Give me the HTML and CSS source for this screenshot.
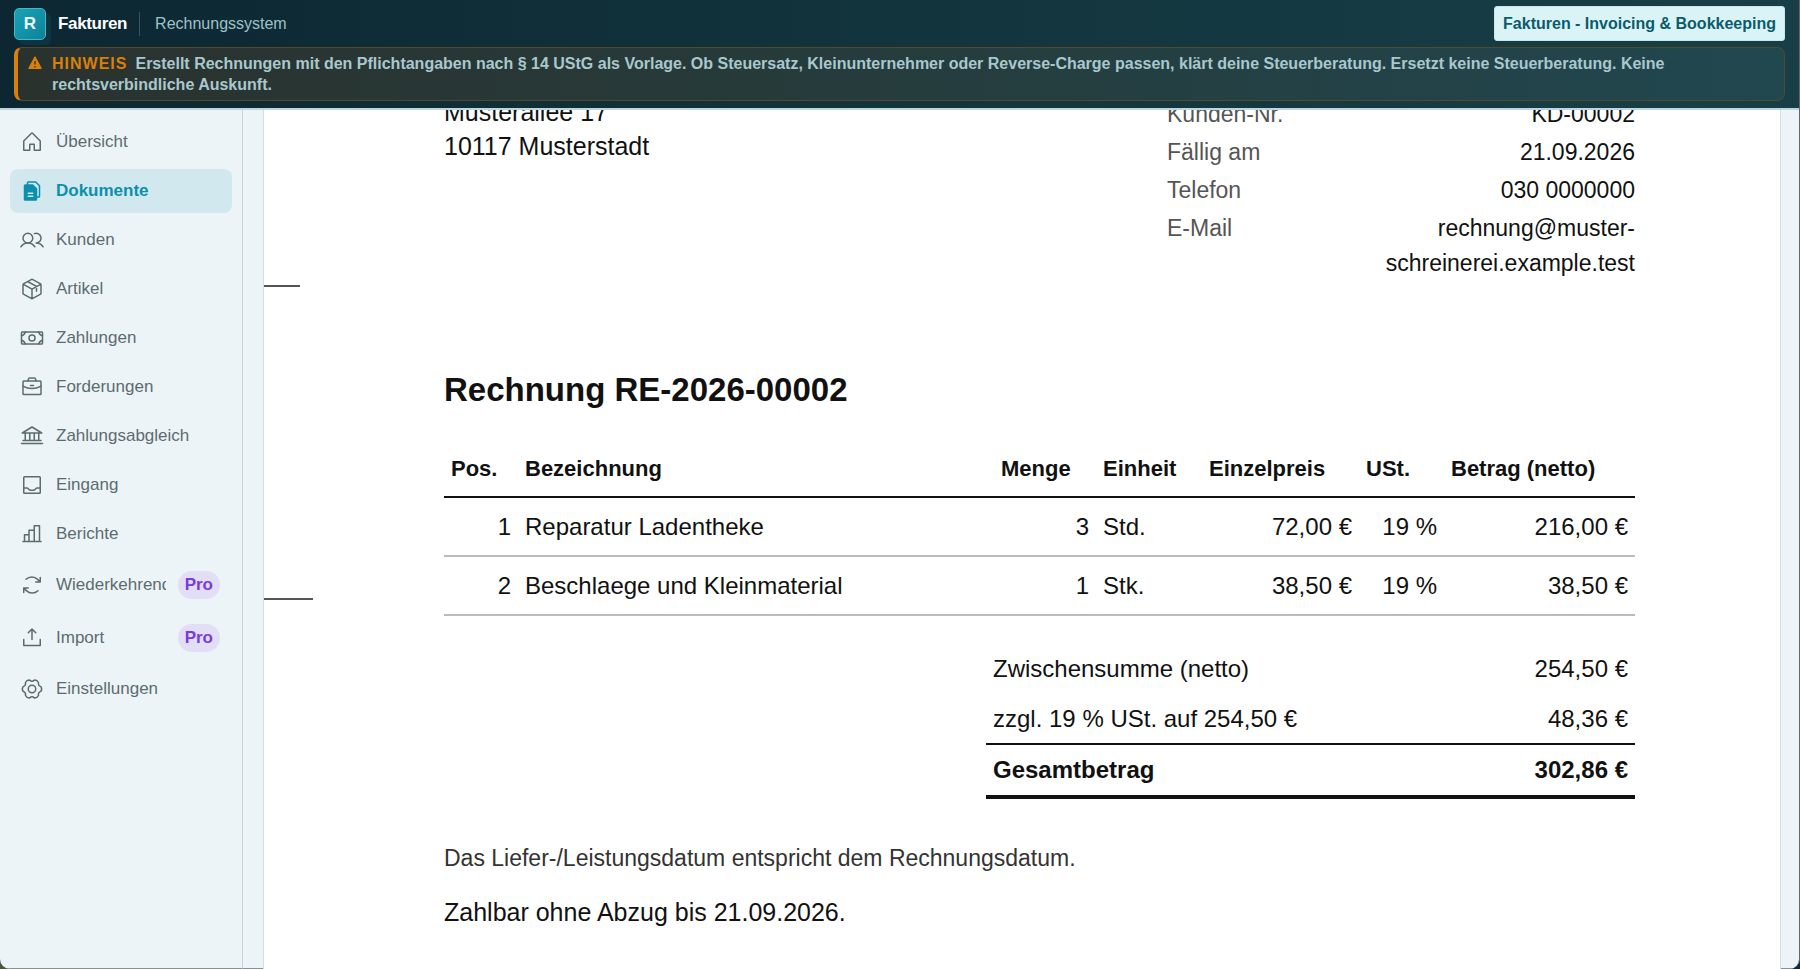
FILE: index.html
```html
<!DOCTYPE html>
<html lang="de">
<head>
<meta charset="utf-8">
<title>Fakturen – Rechnungssystem</title>
<link rel="stylesheet" href="styles.css">
</head>
<body>
<div class="shell">
  <header class="header">
    <div class="topbar">
      <span class="logo">R</span>
      <span class="brand">Fakturen</span>
      <span class="divider"></span>
      <span class="subtitle">Rechnungssystem</span>
      <button class="product" type="button">Fakturen - Invoicing &amp; Bookkeeping</button>
    </div>
    <div class="notice" role="note">
      <svg class="notice-icon" viewBox="0 0 14 14"><path d="M7 1.2 13 12.3H1Z" fill="#d97f0c" stroke="#d97f0c" stroke-width="1.4" stroke-linejoin="round"/><path d="M7 5v3.6M7 10v1.4" stroke="#2b3431" stroke-width="1.3"/></svg>
      <p class="notice-text"><strong class="notice-tag">HINWEIS</strong>Erstellt Rechnungen mit den Pflichtangaben nach § 14 UStG als Vorlage. Ob Steuersatz, Kleinunternehmer oder Reverse-Charge passen, klärt deine Steuerberatung. Ersetzt keine Steuerberatung. Keine rechtsverbindliche Auskunft.</p>
    </div>
  </header>
  <div class="body">
    <nav class="sidebar">
      <a class="item" href="#"><svg class="icon" viewBox="0 0 256 256"><path d="M104 216v-64h48v64h64v-96a8 8 0 0 0-2.34-5.66l-80-80a8 8 0 0 0-11.32 0l-80 80A8 8 0 0 0 40 120v96Z"/></svg><span class="label">Übersicht</span></a>
      <a class="item active" href="#" aria-current="page"><svg class="icon solid" viewBox="0 0 256 256"><path d="M213.66,66.34l-40-40A8,8,0,0,0,168,24H88A16,16,0,0,0,72,40V56H56A16,16,0,0,0,40,72V216a16,16,0,0,0,16,16H168a16,16,0,0,0,16-16V200h16a16,16,0,0,0,16-16V72A8,8,0,0,0,213.66,66.34ZM136,192H88a8,8,0,0,1,0-16h48a8,8,0,0,1,0,16Zm0-32H88a8,8,0,0,1,0-16h48a8,8,0,0,1,0,16Zm64,24H184V104a8,8,0,0,0-2.34-5.66l-40-40A8,8,0,0,0,136,56H88V40h76.69L200,75.31Z"/></svg><span class="label">Dokumente</span></a>
      <a class="item" href="#"><svg class="icon" viewBox="0 0 256 256"><circle cx="84" cy="108" r="52"/><path d="M10.23 200a88 88 0 0 1 147.54 0M172 160a87.93 87.93 0 0 1 73.77 40M152.69 59.7A52 52 0 1 1 172 160"/></svg><span class="label">Kunden</span></a>
      <a class="item" href="#"><svg class="icon" viewBox="0 0 256 256"><path d="M128 129.09V232M32.7 76.92 128 129.08l95.3-52.16M219.84 182.84l-88 48.18a8 8 0 0 1-7.68 0l-88-48.18a8 8 0 0 1-4.16-7V80.18a8 8 0 0 1 4.16-7l88-48.18a8 8 0 0 1 7.68 0l88 48.18a8 8 0 0 1 4.16 7v95.64a8 8 0 0 1-4.16 7.02ZM81.56 48.31 176 100v52"/></svg><span class="label">Artikel</span></a>
      <a class="item" href="#"><svg class="icon" viewBox="0 0 256 256"><rect x="16" y="64" width="224" height="128" rx="8"/><circle cx="128" cy="128" r="32"/><path d="M16 105a56 56 0 0 0 41-41M199 64a56 56 0 0 0 41 41M240 151a56 56 0 0 0-41 41M57 192a56 56 0 0 0-41-41"/></svg><span class="label">Zahlungen</span></a>
      <a class="item" href="#"><svg class="icon" viewBox="0 0 256 256"><rect x="32" y="64" width="192" height="144" rx="8"/><path d="M168 64V48a16 16 0 0 0-16-16h-48a16 16 0 0 0-16 16v16M224 118.31A191.09 191.09 0 0 1 128 144a191.14 191.14 0 0 1-96-25.68M112 112h32"/></svg><span class="label">Forderungen</span></a>
      <a class="item" href="#"><svg class="icon" viewBox="0 0 256 256"><path d="M24 96h208L128 32ZM56 96v80M104 96v80M152 96v80M200 96v80M32 176h192M16 208h224"/></svg><span class="label">Zahlungsabgleich</span></a>
      <a class="item" href="#"><svg class="icon" viewBox="0 0 256 256"><rect x="40" y="40" width="176" height="176" rx="8"/><path d="M40 160h36.69a8 8 0 0 1 5.65 2.34l19.32 19.32a8 8 0 0 0 5.65 2.34h41.38a8 8 0 0 0 5.65-2.34l19.32-19.32a8 8 0 0 1 5.65-2.34H216"/></svg><span class="label">Eingang</span></a>
      <a class="item" href="#"><svg class="icon" viewBox="0 0 256 256"><path d="M48 208v-72h48M32 208h192M96 208V88h56M152 208V40h56v168"/></svg><span class="label">Berichte</span></a>
      <a class="item" href="#"><svg class="icon" viewBox="0 0 256 256"><path d="M168 96h48V48M216 96l-28.28-28.28A88 88 0 0 0 64 67M88 160H40v48M40 160l28.28 28.28A88 88 0 0 0 192 189"/></svg><span class="label">Wiederkehrend</span><span class="pro">Pro</span></a>
      <a class="item" href="#"><svg class="icon" viewBox="0 0 256 256"><path d="M216 144v64H40v-64M128 144V32M88 72l40-40 40 40"/></svg><span class="label">Import</span><span class="pro">Pro</span></a>
      <a class="item" href="#"><svg class="icon" viewBox="0 0 256 256"><circle cx="128" cy="128" r="40"/><path d="M222.7 102.6Q240 128 222.7 153.4Q190.4 164 197.3 197.3Q184 225 153.4 222.7Q128 200 102.6 222.7Q72 225 58.7 197.3Q65.6 164 33.3 153.4Q16 128 33.3 102.6Q65.6 92 58.7 58.7Q72 31 102.6 33.3Q128 56 153.4 33.3Q184 31 197.3 58.7Q190.4 92 222.7 102.6Z"/></svg><span class="label">Einstellungen</span></a>
    </nav>
    <main class="main">
      <article class="paper">
        <span class="fold fold-upper"></span>
        <span class="fold fold-lower"></span>
        <div class="head">
          <address class="address">Musterallee 17<br>10117 Musterstadt</address>
          <dl class="meta">
            <dt>Kunden-Nr.</dt><dd>KD-00002</dd>
            <dt>Fällig am</dt><dd>21.09.2026</dd>
            <dt>Telefon</dt><dd>030 0000000</dd>
            <dt>E-Mail</dt><dd>rechnung@muster-<br>schreinerei.example.test</dd>
          </dl>
        </div>
        <h1 class="title">Rechnung RE-2026-00002</h1>
        <table class="lines">
          <colgroup><col class="c-pos"><col><col class="c-qty"><col class="c-unit"><col class="c-price"><col class="c-tax"><col class="c-sum"></colgroup>
          <thead><tr><th>Pos.</th><th>Bezeichnung</th><th>Menge</th><th>Einheit</th><th>Einzelpreis</th><th>USt.</th><th>Betrag (netto)</th></tr></thead>
          <tbody>
            <tr><td class="num">1</td><td>Reparatur Ladentheke</td><td class="num">3</td><td>Std.</td><td class="num">72,00 €</td><td class="num">19 %</td><td class="num">216,00 €</td></tr>
            <tr><td class="num">2</td><td>Beschlaege und Kleinmaterial</td><td class="num">1</td><td>Stk.</td><td class="num">38,50 €</td><td class="num">19 %</td><td class="num">38,50 €</td></tr>
          </tbody>
        </table>
        <table class="totals">
          <tbody>
            <tr><td>Zwischensumme (netto)</td><td class="num">254,50 €</td></tr>
            <tr><td>zzgl. 19 % USt. auf 254,50 €</td><td class="num">48,36 €</td></tr>
            <tr class="grand"><td>Gesamtbetrag</td><td class="num">302,86 €</td></tr>
          </tbody>
        </table>
        <p class="remark">Das Liefer-/Leistungsdatum entspricht dem Rechnungsdatum.</p>
        <p class="terms">Zahlbar ohne Abzug bis 21.09.2026.</p>
      </article>
    </main>
  </div>
</div>
</body>
</html>
```
FILE: styles.css
```css
* { box-sizing: border-box; }
body {
  margin: 0;
  font-family: "Liberation Sans", Arial, sans-serif;
  background: linear-gradient(90deg, #4c5540, #0e2c34);
}
.shell {
  height: 100vh;
  display: flex;
  flex-direction: column;
  overflow: hidden;
  border-right: 1px solid #5c686b;
  border-radius: 0 0 10px 10px;
  background: #edf4f7;
}
.header {
  flex: none;
  padding: 6px 14px 7px;
  border-bottom: 2px solid #bdd6dd;
  background: linear-gradient(90deg, #0c2731, #12343d 50%, #183f47);
}
.topbar {
  display: flex;
  align-items: center;
  height: 35px;
  margin-bottom: 6px;
}
.logo {
  width: 32px;
  height: 32px;
  border: 1px solid #4bb5c4;
  border-radius: 5px;
  background: linear-gradient(135deg, #19a3b8, #0c8299);
  box-shadow: 5px 5px 0 #0d3541;
  color: #e9fbfd;
  font-size: 17px;
  font-weight: bold;
  line-height: 30px;
  text-align: center;
}
.brand { margin-left: 12px; color: #fff; font-size: 17px; font-weight: bold; letter-spacing: -0.02em; }
.divider { width: 1px; height: 24px; margin: 0 15px 0 12px; background: #3c565e; }
.subtitle { color: #9fc1c9; font-size: 16px; }
.product {
  height: 35px;
  margin-left: auto;
  padding: 0 8px;
  border: 1px solid #c5e8ec;
  border-radius: 3px;
  background: #daf3f6;
  color: #0b5c6b;
  font: bold 16px "Liberation Sans", Arial, sans-serif;
}
.notice {
  display: flex;
  gap: 10px;
  padding: 5px 10px;
  border: 1px solid #55492c;
  border-left: 4px solid #d97f0c;
  border-radius: 8px;
  background: linear-gradient(90deg, #2a322e, #263b3b 45%, #21474f);
}
.notice-icon { flex: none; width: 14px; height: 14px; margin-top: 3px; }
.notice-text { margin: 0; color: #a9c8cd; font-size: 16px; font-weight: bold; line-height: 21px; }
.notice-tag { margin-right: 8px; color: #d97f0c; letter-spacing: 1px; }
.body { flex: 1; display: flex; min-height: 0; }
.sidebar {
  flex: none;
  width: 243px;
  display: flex;
  flex-direction: column;
  gap: 5px;
  padding: 10px;
  border-right: 1px solid #c8d4d8;
  border-bottom: 1px solid #8a9091;
}
.item {
  display: flex;
  align-items: center;
  gap: 12px;
  padding: 10px 12px 10px 10px;
  border-radius: 8px;
  color: #5b6c6f;
  font-size: 17px;
  line-height: 24px;
  text-decoration: none;
}
.item.active { background: #d1e9ee; color: #0b8fad; font-weight: bold; }
.icon {
  flex: none;
  width: 24px;
  height: 24px;
  fill: none;
  stroke: currentColor;
  stroke-width: 16;
  stroke-linecap: round;
  stroke-linejoin: round;
}
.icon.solid { fill: currentColor; stroke: none; }
.label { flex: 1; min-width: 0; overflow: hidden; white-space: nowrap; }
.pro { padding: 0 7px; border-radius: 15px; background: #e1def5; color: #7c3bdc; font-weight: bold; line-height: 28px; }
.main { flex: 1; min-width: 0; overflow: hidden; padding: 0 19px 0 21px; box-shadow: inset 0 -1px #8a9091; }
.paper {
  position: relative;
  min-height: 110%;
  margin-top: -20px;
  padding: 5px 145px 0 180px;
  background: #fff;
  box-shadow: 0 0 0 1px #d3dfe2;
  color: #111;
}
.fold { position: absolute; left: 0; height: 2px; background: #555; }
.fold-upper { top: 195px; width: 36px; }
.fold-lower { top: 508px; width: 49px; }
.head { display: flex; justify-content: space-between; height: 252px; }
.address { font-size: 25px; font-style: normal; line-height: 34px; }
.meta {
  display: grid;
  grid-template-columns: 1fr auto;
  align-content: start;
  row-gap: 3px;
  width: 468px;
  margin: 2px 0 0;
  font-size: 23px;
  line-height: 35px;
}
.meta dt { color: #555; }
.meta dd { margin: 0; text-align: right; }
.title { margin: 23px 0 31px; font-size: 33px; line-height: 40px; }
.lines, .totals { border-collapse: collapse; table-layout: fixed; }
.lines { width: 100%; font-size: 24px; }
.c-pos { width: 74px; }
.c-qty { width: 102px; }
.c-unit { width: 106px; }
.c-price { width: 157px; }
.c-tax { width: 85px; }
.c-sum { width: 191px; }
th, td { padding: 0 7px; text-align: left; white-space: nowrap; }
.lines th { height: 56px; border-bottom: 2px solid #111; font-size: 22px; }
.lines td { height: 59px; border-bottom: 2px solid #bbb; }
.lines .num, .totals .num { text-align: right; }
.totals { width: 649px; margin: 28px 0 0 auto; font-size: 24px; }
.totals td { height: 50px; }
.totals .grand td { height: 53px; border-top: 2px solid #111; border-bottom: 4px solid #111; font-weight: bold; }
.remark { margin: 42px 0 20px; color: #333; font-size: 23px; line-height: 34px; }
.terms { margin: 0; font-size: 25px; line-height: 34px; }
```
